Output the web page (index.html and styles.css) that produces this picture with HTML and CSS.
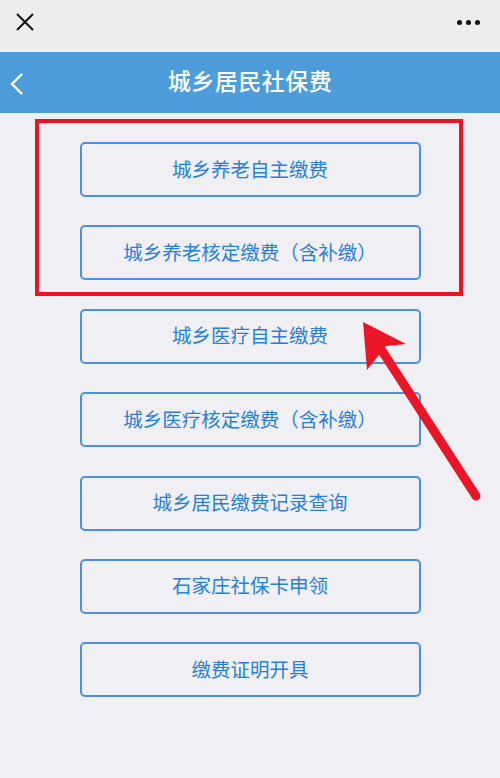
FILE: index.html
```html
<!DOCTYPE html>
<html lang="zh-CN">
<head>
    <meta charset="UTF-8">
    <meta name="viewport" content="width=device-width, initial-scale=1.0">
    <title>城乡居民社保费</title>
    <link rel="stylesheet" href="styles.css">
</head>
<body>

    <div class="top-bar">
        <svg class="close-icon" width="20" height="20" viewBox="0 0 20 20">
            <path d="M2 2 L18 18 M18 2 L2 18" stroke="#111" stroke-width="2" fill="none"/>
        </svg>
        <div class="more-icon">
            <span></span><span></span><span></span>
        </div>
    </div>

    <div class="nav-bar">
        <svg class="back-icon" width="14" height="24" viewBox="0 0 14 24">
            <path d="M12 2 L2 12 L12 22" stroke="#fff" stroke-width="2.4" fill="none"/>
        </svg>
        <h1>城乡居民社保费</h1>
    </div>

    <ul class="menu">
        <li><a href="#">城乡养老自主缴费</a></li>
        <li><a href="#">城乡养老核定缴费（含补缴）</a></li>
        <li><a href="#">城乡医疗自主缴费</a></li>
        <li><a href="#">城乡医疗核定缴费（含补缴）</a></li>
        <li><a href="#">城乡居民缴费记录查询</a></li>
        <li><a href="#">石家庄社保卡申领</a></li>
        <li><a href="#">缴费证明开具</a></li>
    </ul>

    <!-- annotation drawn over the screenshot -->
    <div class="mark-box"></div>
    <svg class="mark-arrow" width="500" height="778" viewBox="0 0 500 778">
        <path d="M476 496 L375 340" stroke="#ea1526" stroke-width="9" stroke-linecap="round" fill="none"/>
        <path d="M363 322 L406 344 L386 346 L367 370 Z" fill="#ea1526"/>
    </svg>

</body>
</html>
```

FILE: styles.css
```css
* {
    box-sizing: border-box;
}

body {
    margin: 0;
    width: 500px;
    min-height: 778px;
    background-color: #efeff4;
    font-family: "Noto Sans CJK SC", "Noto Sans", sans-serif;
    position: relative;
    overflow: hidden;
}

.top-bar {
    height: 52px;
    background-color: #ededed;
    display: flex;
    justify-content: space-between;
    align-items: center;
    padding: 0 20px 8px 15px;
}

.more-icon {
    display: flex;
    gap: 4px;
}
.more-icon span {
    width: 5px;
    height: 5px;
    border-radius: 50%;
    background-color: #111;
}

.nav-bar {
    height: 61px;
    background-color: #4c9dda;
    display: flex;
    align-items: center;
    justify-content: center;
    padding-bottom: 5px;
    position: relative;
}
.back-icon {
    position: absolute;
    left: 10px;
    top: 20px;
}
.nav-bar h1 {
    margin: 0;
    color: #fff;
    font-size: 23px;
    font-weight: 500;
    letter-spacing: 0.5px;
}

.menu {
    list-style: none;
    margin: 0;
    padding: 29px 0 0;
    display: flex;
    flex-direction: column;
    align-items: center;
    gap: 28.4px;
}
.menu li a {
    display: flex;
    align-items: center;
    justify-content: center;
    width: 341px;
    height: 55px;
    border: 2px solid #4a92e0;
    border-radius: 5px;
    color: #2a80d6;
    font-size: 19.5px;
    text-decoration: none;
    padding-bottom: 3px;
}

.mark-box {
    position: absolute;
    left: 35px;
    top: 119px;
    width: 428px;
    height: 177px;
    border: 4px solid #e8141f;
}
.mark-arrow {
    position: absolute;
    left: 0;
    top: 0;
}
```
